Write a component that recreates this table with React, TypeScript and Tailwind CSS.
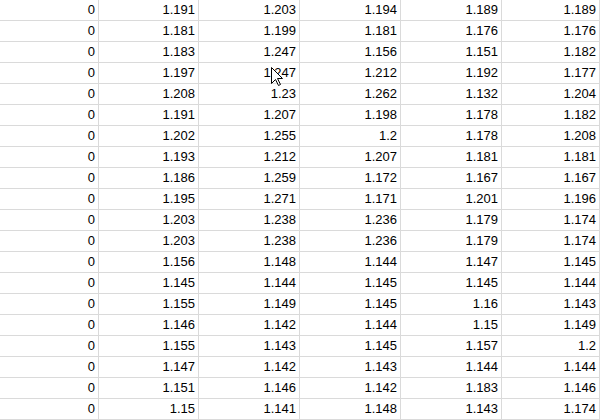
import React from "react";

const rows: string[][] = [
  ["0", "1.191", "1.203", "1.194", "1.189", "1.189"],
  ["0", "1.181", "1.199", "1.181", "1.176", "1.176"],
  ["0", "1.183", "1.247", "1.156", "1.151", "1.182"],
  ["0", "1.197", "1.247", "1.212", "1.192", "1.177"],
  ["0", "1.208", "1.23", "1.262", "1.132", "1.204"],
  ["0", "1.191", "1.207", "1.198", "1.178", "1.182"],
  ["0", "1.202", "1.255", "1.2", "1.178", "1.208"],
  ["0", "1.193", "1.212", "1.207", "1.181", "1.181"],
  ["0", "1.186", "1.259", "1.172", "1.167", "1.167"],
  ["0", "1.195", "1.271", "1.171", "1.201", "1.196"],
  ["0", "1.203", "1.238", "1.236", "1.179", "1.174"],
  ["0", "1.203", "1.238", "1.236", "1.179", "1.174"],
  ["0", "1.156", "1.148", "1.144", "1.147", "1.145"],
  ["0", "1.145", "1.144", "1.145", "1.145", "1.144"],
  ["0", "1.155", "1.149", "1.145", "1.16", "1.143"],
  ["0", "1.146", "1.142", "1.144", "1.15", "1.149"],
  ["0", "1.155", "1.143", "1.145", "1.157", "1.2"],
  ["0", "1.147", "1.142", "1.143", "1.144", "1.144"],
  ["0", "1.151", "1.146", "1.142", "1.183", "1.146"],
  ["0", "1.15", "1.141", "1.148", "1.143", "1.174"],
];

function Cursor() {
  return (
    <svg
      className="pointer-events-none absolute left-[271px] top-[67px]"
      width="13"
      height="20"
      viewBox="0 0 13 20"
    >
      <path
        d="M0.5 0.5 V16.5 L4.5 12.5 L7.5 18.5 L9.5 17.5 L6.5 11.5 H11.5 Z"
        fill="#fff"
        stroke="#000"
        strokeWidth="1"
        strokeLinejoin="miter"
      />
    </svg>
  );
}

export default function App() {
  return (
    <div className="relative h-[420px] w-[600px] overflow-hidden bg-white font-['Liberation_Sans',Arial,sans-serif] text-[13px] text-black">
      <div className="grid grid-cols-[99px_100px_101px_101px_101px_1fr]">
        {rows.map((row, i) =>
          row.map((v, j) => (
            <div
              key={`${i}-${j}`}
              className="h-[21px] border-b border-r border-[#dadada] pr-[3px] text-right leading-[20px]"
            >
              {v}
            </div>
          ))
        )}
      </div>
      <Cursor />
    </div>
  );
}
